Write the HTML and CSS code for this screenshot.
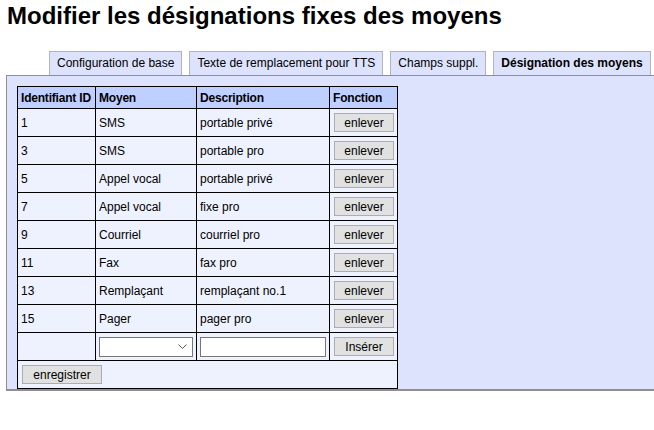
FILE: index.html
```html
<!DOCTYPE html>
<html lang="fr">
<head>
    <meta charset="UTF-8">
    <title>Modifier les désignations fixes des moyens</title>
    <link rel="stylesheet" href="styles.css">
</head>
<body>
    <h1>Modifier les désignations fixes des moyens</h1>
    <ul class="tabs">
        <li>Configuration de base</li>
        <li>Texte de remplacement pour TTS</li>
        <li>Champs suppl.</li>
        <li class="active">Désignation des moyens</li>
    </ul>
    <div class="panel">
        <table class="means">
            <thead>
                <tr>
                    <th class="col-id">Identifiant ID</th>
                    <th class="col-type">Moyen</th>
                    <th class="col-desc">Description</th>
                    <th class="col-fn">Fonction</th>
                </tr>
            </thead>
            <tbody>
                <tr><td>1</td><td>SMS</td><td>portable privé</td><td><button>enlever</button></td></tr>
                <tr><td>3</td><td>SMS</td><td>portable pro</td><td><button>enlever</button></td></tr>
                <tr><td>5</td><td>Appel vocal</td><td>portable privé</td><td><button>enlever</button></td></tr>
                <tr><td>7</td><td>Appel vocal</td><td>fixe pro</td><td><button>enlever</button></td></tr>
                <tr><td>9</td><td>Courriel</td><td>courriel pro</td><td><button>enlever</button></td></tr>
                <tr><td>11</td><td>Fax</td><td>fax pro</td><td><button>enlever</button></td></tr>
                <tr><td>13</td><td>Remplaçant</td><td>remplaçant no.1</td><td><button>enlever</button></td></tr>
                <tr><td>15</td><td>Pager</td><td>pager pro</td><td><button>enlever</button></td></tr>
                <tr class="new-row">
                    <td></td>
                    <td>
                        <div class="select">
                            <svg width="9" height="6" viewBox="0 0 9 6"><path d="M0.5 0.5 L4.5 4.5 L8.5 0.5" fill="none" stroke="#555" stroke-width="1"/></svg>
                        </div>
                    </td>
                    <td><input type="text" class="desc-input"></td>
                    <td><button>Insérer</button></td>
                </tr>
                <tr class="save-row">
                    <td colspan="4"><button class="save">enregistrer</button></td>
                </tr>
            </tbody>
        </table>
    </div>
</body>
</html>
```

FILE: styles.css
```css
body {
    font-family: "Liberation Sans", Arial, sans-serif;
    font-size: 12px;
    color: #000;
    background-color: #fff;
    margin: 0;
    padding: 0 0 0 6px;
    overflow: hidden;
}
h1 {
    font-size: 24px;
    font-weight: bold;
    margin: 0;
    padding: 3px 0 0 1px;
    height: 48px;
    line-height: 26px;
}
.tabs {
    list-style: none;
    display: flex;
    gap: 7px;
    margin: 0;
    padding: 0 0 0 43px;
}
.tabs li {
    height: 23px;
    line-height: 23px;
    padding: 0 7px;
    background-color: #dde3fc;
    border: 1px solid #b4b4b4;
    border-bottom: none;
    font-size: 12px;
}
.tabs li.active {
    font-weight: bold;
}
.panel {
    background-color: #dde3fc;
    border: 1px solid #8f8f8f;
    border-bottom-width: 2px;
    margin-right: -20px;
    padding: 10px 0 0 10px;
}
.means {
    border-collapse: collapse;
    border: 1px solid #000;
    white-space: nowrap;
}
.means th,
.means td {
    border: 1px solid #000;
    text-align: left;
    padding: 0 3px;
    height: 27px;
    background-color: #eef2ff;
}
.means th {
    background-color: #bfcfff;
    font-weight: bold;
    height: 21px;
    letter-spacing: -0.2px;
}
.col-id { width: 71px; }
.col-type { width: 92px; }
.col-desc { width: 126px; }
.col-fn { width: 61px; }
.means button {
    font-family: "Liberation Sans", Arial, sans-serif;
    font-size: 12px;
    background-color: #e1e1e1;
    border: 1px solid #adadad;
    padding: 0;
    width: 60px;
    height: 19px;
    margin-left: 1px;
    color: #000;
}
.means button.save {
    width: 80px;
    margin-left: 1px;
}
.select {
    width: 94px;
    height: 20px;
    border: 1px solid #767676;
    background-color: #fff;
    display: flex;
    align-items: center;
    justify-content: flex-end;
    padding-right: 5px;
    box-sizing: border-box;
}
.desc-input {
    width: 126px;
    height: 20px;
    box-sizing: border-box;
    border: 1px solid #767676;
    padding: 0 2px;
    margin: 0;
    display: block;
}
```
